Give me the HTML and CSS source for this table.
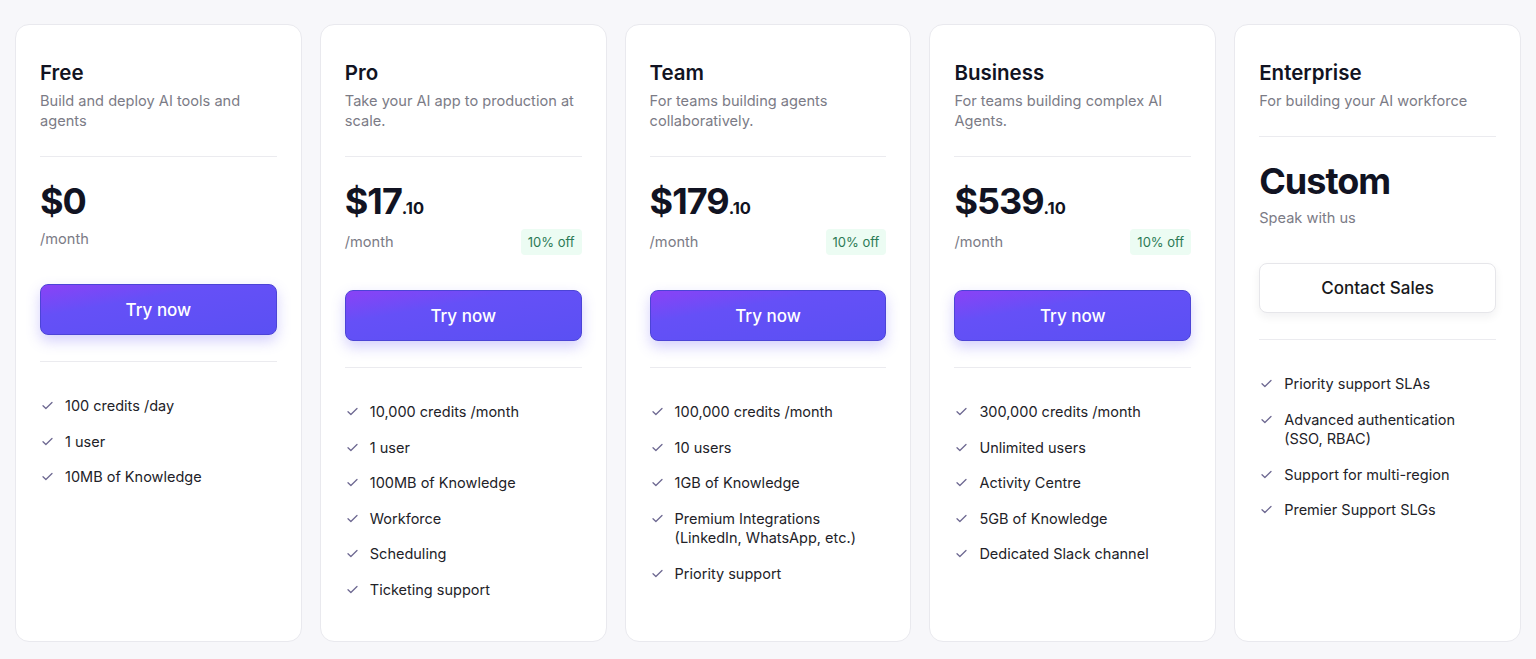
FILE: index.html
```html
<!DOCTYPE html>
<html>
<head>
  <title>Pricing</title>
  <link rel="stylesheet" href="styles.css">
</head>
<body>
  <div class="plans">

    <div class="plan">
      <h2 class="plan-name">Free</h2>
      <p class="plan-desc">Build and deploy AI tools and agents</p>
      <hr class="line">
      <div class="price">$0</div>
      <div class="per-row"><span class="per">/month</span></div>
      <button class="btn-try">Try now</button>
      <hr class="line">
      <ul class="features">
        <li><svg class="tick" viewBox="0 0 12 10"><path d="M1 5.2l3.2 3.2L11 1.6"/></svg>100 credits /day</li>
        <li><svg class="tick" viewBox="0 0 12 10"><path d="M1 5.2l3.2 3.2L11 1.6"/></svg>1 user</li>
        <li><svg class="tick" viewBox="0 0 12 10"><path d="M1 5.2l3.2 3.2L11 1.6"/></svg>10MB of Knowledge</li>
      </ul>
    </div>

    <div class="plan">
      <h2 class="plan-name">Pro</h2>
      <p class="plan-desc">Take your AI app to production at scale.</p>
      <hr class="line">
      <div class="price">$17<small>.10</small></div>
      <div class="per-row"><span class="per">/month</span><span class="off">10% off</span></div>
      <button class="btn-try">Try now</button>
      <hr class="line">
      <ul class="features">
        <li><svg class="tick" viewBox="0 0 12 10"><path d="M1 5.2l3.2 3.2L11 1.6"/></svg>10,000 credits /month</li>
        <li><svg class="tick" viewBox="0 0 12 10"><path d="M1 5.2l3.2 3.2L11 1.6"/></svg>1 user</li>
        <li><svg class="tick" viewBox="0 0 12 10"><path d="M1 5.2l3.2 3.2L11 1.6"/></svg>100MB of Knowledge</li>
        <li><svg class="tick" viewBox="0 0 12 10"><path d="M1 5.2l3.2 3.2L11 1.6"/></svg>Workforce</li>
        <li><svg class="tick" viewBox="0 0 12 10"><path d="M1 5.2l3.2 3.2L11 1.6"/></svg>Scheduling</li>
        <li><svg class="tick" viewBox="0 0 12 10"><path d="M1 5.2l3.2 3.2L11 1.6"/></svg>Ticketing support</li>
      </ul>
    </div>

    <div class="plan">
      <h2 class="plan-name">Team</h2>
      <p class="plan-desc">For teams building agents collaboratively.</p>
      <hr class="line">
      <div class="price">$179<small>.10</small></div>
      <div class="per-row"><span class="per">/month</span><span class="off">10% off</span></div>
      <button class="btn-try">Try now</button>
      <hr class="line">
      <ul class="features">
        <li><svg class="tick" viewBox="0 0 12 10"><path d="M1 5.2l3.2 3.2L11 1.6"/></svg>100,000 credits /month</li>
        <li><svg class="tick" viewBox="0 0 12 10"><path d="M1 5.2l3.2 3.2L11 1.6"/></svg>10 users</li>
        <li><svg class="tick" viewBox="0 0 12 10"><path d="M1 5.2l3.2 3.2L11 1.6"/></svg>1GB of Knowledge</li>
        <li><svg class="tick" viewBox="0 0 12 10"><path d="M1 5.2l3.2 3.2L11 1.6"/></svg>Premium Integrations (LinkedIn, WhatsApp, etc.)</li>
        <li><svg class="tick" viewBox="0 0 12 10"><path d="M1 5.2l3.2 3.2L11 1.6"/></svg>Priority support</li>
      </ul>
    </div>

    <div class="plan">
      <h2 class="plan-name">Business</h2>
      <p class="plan-desc">For teams building complex AI Agents.</p>
      <hr class="line">
      <div class="price">$539<small>.10</small></div>
      <div class="per-row"><span class="per">/month</span><span class="off">10% off</span></div>
      <button class="btn-try">Try now</button>
      <hr class="line">
      <ul class="features">
        <li><svg class="tick" viewBox="0 0 12 10"><path d="M1 5.2l3.2 3.2L11 1.6"/></svg>300,000 credits /month</li>
        <li><svg class="tick" viewBox="0 0 12 10"><path d="M1 5.2l3.2 3.2L11 1.6"/></svg>Unlimited users</li>
        <li><svg class="tick" viewBox="0 0 12 10"><path d="M1 5.2l3.2 3.2L11 1.6"/></svg>Activity Centre</li>
        <li><svg class="tick" viewBox="0 0 12 10"><path d="M1 5.2l3.2 3.2L11 1.6"/></svg>5GB of Knowledge</li>
        <li><svg class="tick" viewBox="0 0 12 10"><path d="M1 5.2l3.2 3.2L11 1.6"/></svg>Dedicated Slack channel</li>
      </ul>
    </div>

    <div class="plan">
      <h2 class="plan-name">Enterprise</h2>
      <p class="plan-desc">For building your AI workforce</p>
      <hr class="line">
      <div class="price">Custom</div>
      <div class="speak">Speak with us</div>
      <button class="btn-contact">Contact Sales</button>
      <hr class="line">
      <ul class="features">
        <li><svg class="tick" viewBox="0 0 12 10"><path d="M1 5.2l3.2 3.2L11 1.6"/></svg>Priority support SLAs</li>
        <li><svg class="tick" viewBox="0 0 12 10"><path d="M1 5.2l3.2 3.2L11 1.6"/></svg>Advanced authentication (SSO, RBAC)</li>
        <li><svg class="tick" viewBox="0 0 12 10"><path d="M1 5.2l3.2 3.2L11 1.6"/></svg>Support for multi-region</li>
        <li><svg class="tick" viewBox="0 0 12 10"><path d="M1 5.2l3.2 3.2L11 1.6"/></svg>Premier Support SLGs</li>
      </ul>
    </div>

  </div>
</body>
</html>
```

FILE: styles.css
```css
body {
  margin: 0;
  background: #f7f7fa;
  font-family: Inter, "Noto Sans", sans-serif;
  color: #18181b;
}

.plans {
  display: grid;
  grid-template-columns: repeat(5, 1fr);
  gap: 18px;
  height: 100vh;
  padding: 24px 15px 17px;
  box-sizing: border-box;
}

.plan {
  background: #fff;
  border: 1px solid #e9e9ee;
  border-radius: 14px;
  padding: 34px 24px 20px;
  display: flex;
  flex-direction: column;
  min-width: 0;
}

.plan-name {
  margin: 0;
  font-size: 20.5px;
  line-height: 28px;
  font-weight: 600;
  color: #111322;
}

.plan-desc {
  margin: 4px 0 0;
  font-size: 14.6px;
  line-height: 20px;
  color: #7b7b86;
  min-height: 40px;
}

.plan:last-child .plan-desc {
  min-height: 20px;
}

.line {
  border: 0;
  border-top: 1px solid #ebebef;
  margin: 25px 0 0;
  width: 100%;
}

.price {
  margin-top: 22px;
  font-size: 36px;
  line-height: 44px;
  font-weight: 700;
  color: #111322;
  letter-spacing: -1px;
}

.price small {
  font-size: 16.5px;
  line-height: 0;
  letter-spacing: 0;
}

.per-row {
  display: flex;
  justify-content: space-between;
  align-items: center;
  margin-top: 6px;
  min-height: 20px;
}

.per, .speak {
  font-size: 14.6px;
  line-height: 20px;
  color: #7b7b86;
}

.speak {
  margin-top: 5px;
}

.off {
  background: #ecfcf3;
  color: #2b7a55;
  font-size: 13px;
  line-height: 26px;
  padding: 0 7px;
  border-radius: 4px;
}

.btn-try, .btn-contact {
  margin-top: 35px;
  width: 100%;
  height: 51px;
  border-radius: 8px;
  font-family: inherit;
  font-size: 17px;
  font-weight: 500;
  cursor: pointer;
}

.btn-try {
  color: #fff;
  border: 1px solid #4c44d6;
  background: linear-gradient(170deg, #8a42f6 0%, #6550f7 35%, #5a50f3 100%);
  box-shadow: 0 6px 14px rgba(99, 86, 246, 0.28);
}

.btn-contact {
  height: 50px;
  color: #18181b;
  background: #fff;
  border: 1px solid #e6e6ea;
  box-shadow: 0 4px 10px rgba(20, 20, 40, 0.06);
}

.plan .btn-try + .line,
.plan .btn-contact + .line {
  margin-top: 26px;
}

.features {
  list-style: none;
  margin: 34px 0 0;
  padding: 0;
  display: flex;
  flex-direction: column;
  gap: 16px;
}

.features li {
  display: flex;
  align-items: flex-start;
  font-size: 14.5px;
  line-height: 19.5px;
  color: #222228;
}

.tick {
  flex: none;
  width: 11px;
  height: 9px;
  margin: 5px 12px 0 2px;
  fill: none;
  stroke: #6d6891;
  stroke-width: 1.4;
  stroke-linecap: round;
  stroke-linejoin: round;
}
```
